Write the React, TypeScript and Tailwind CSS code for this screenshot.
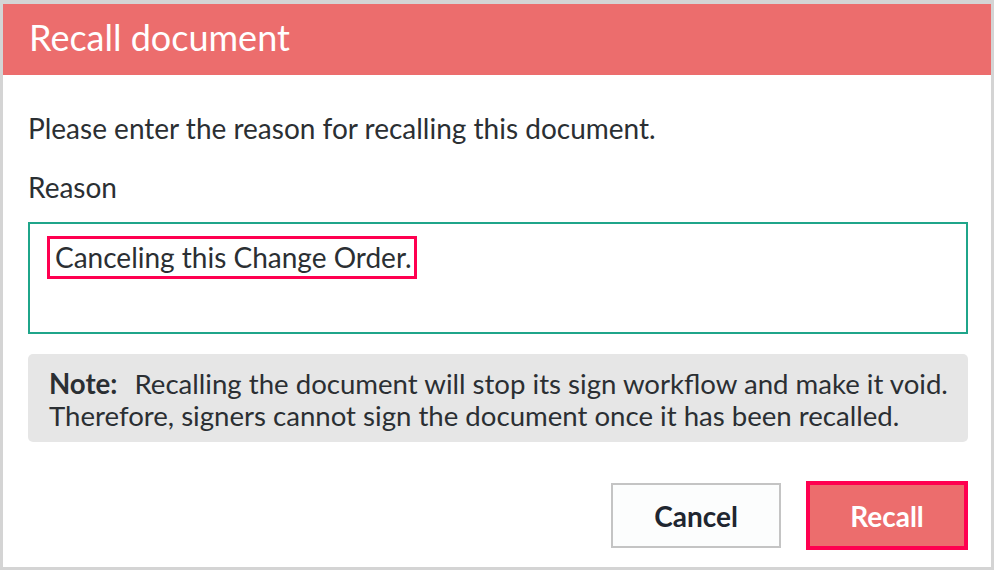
export default function App() {
  return (
    <div className="w-[994px] h-[570px] bg-white border-[#d4d4d4] border-x-[3px] border-t-[4px] border-b-[3px] flex flex-col font-['Lato','Noto_Sans',sans-serif] text-[#2b2f33]">
      {/* Header */}
      <div className="h-[71px] bg-[#ec6d6d] flex items-center pl-[26px]">
        <h1 className="text-white text-[36px] leading-none pb-[5px]">Recall document</h1>
      </div>

      {/* Body */}
      <div className="flex flex-col pl-[25px] pr-[23px]">
        <p className="text-[28px] leading-[32px] mt-[37px]">
          Please enter the reason for recalling this document.
        </p>
        <p className="text-[28px] leading-[32px] mt-[27px]">Reason</p>

        <div className="mt-[19px] h-[112px] border-2 border-[#1fa58a] pl-[17px] pt-[12px]">
          <span className="inline-block border-[3px] border-[#ff0050] pl-[5px] pr-[2px] text-[28px] leading-[37px]">
            Canceling this Change Order.
          </span>
        </div>

        <div className="mt-[20px] bg-[#e6e6e6] rounded-[5px] pl-[21px] pr-[12px] pt-[14px] pb-[10px] text-[27.6px] leading-[32px]">
          <span className="font-bold mr-[10px]">Note:</span> Recalling the document will stop its sign workflow and make it void.
          <br />
          Therefore, signers cannot sign the document once it has been recalled.
        </div>

        <div className="mt-[39px] flex justify-end items-center gap-[25px]">
          <button className="w-[170px] h-[65px] border-2 border-[#c4c4c4] bg-[#fcfdfd] text-[28px] font-bold text-[#1f2630]">
            Cancel
          </button>
          <button className="w-[162px] h-[69px] border-4 border-[#ff0050] bg-[#ec6d6d] text-[28px] font-bold text-white">
            Recall
          </button>
        </div>
      </div>
    </div>
  );
}
